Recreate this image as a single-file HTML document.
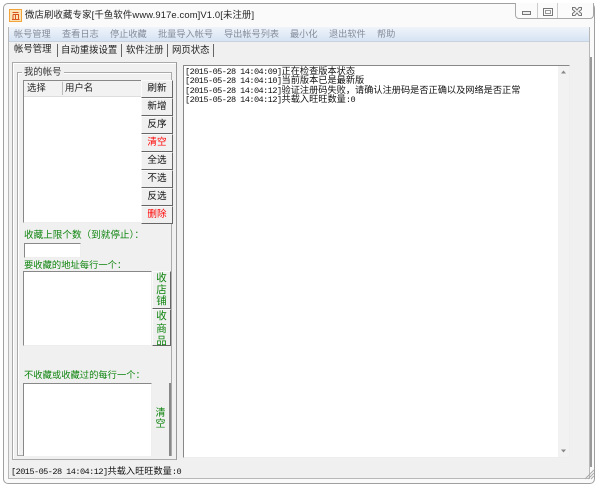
<!DOCTYPE html>
<html><head><meta charset="utf-8"><style>
html,body{margin:0;padding:0;background:#fff}
body{width:600px;height:487px;position:relative;overflow:hidden;font-family:"Liberation Sans","Noto Sans CJK SC",sans-serif;font-size:9.2px;color:#222;filter:blur(.25px)}
div{position:absolute;box-sizing:border-box}
.t{white-space:nowrap;line-height:12px}
.m{color:#858d9c}
.g{color:#0f850f}
.b{left:141px;width:32px;height:18px;background:#f0f0f0;border:1px solid;border-color:#fafafa #666 #666 #fafafa;text-align:center;line-height:16px;font-size:9.6px;color:#111}
.ta{background:#fff;border:1px solid;border-color:#888 #eee #eee #888}
.l{left:185px;white-space:nowrap;line-height:9px;font-size:9.2px;color:#111}
.n{font-family:"Liberation Mono",monospace;font-size:8.6px;letter-spacing:-.56px}
</style></head><body>
<div style="left:3px;top:3px;width:592px;height:481px;background:#fafafa;border:1px solid #a0a0a0;border-radius:5px"></div>
<div style="left:8px;top:27px;width:582px;height:452px;background:#f0f0f0;border:1px solid #b8b8b8;border-top:none"></div>
<!-- icon -->
<div style="left:9px;top:9px;width:13px;height:13px;background:#fde3b8;border:1px solid #f2a33a"></div>
<svg style="position:absolute;left:9px;top:9px" width="13" height="13"><path d="M3.5 3.5H9.5M4 5.5V10.5H9.5V5.5H4M6.5 5.5V10.5M3 10.5H10.5" stroke="#d9531e" fill="none"/></svg>
<div class="t" style="left:25px;top:9px;font-size:9.4px;color:#222;letter-spacing:.14px">微店刷收藏专家[千鱼软件www.917e.com]V1.0[未注册]</div>
<!-- window controls -->
<div style="left:515px;top:3px;width:79px;height:16px;background:#fbfbfb;border:1px solid #a8a8a8;border-top:none;border-radius:0 0 4px 4px"></div>
<div style="left:537px;top:3px;width:1px;height:15px;background:#ccc"></div>
<div style="left:557px;top:3px;width:1px;height:15px;background:#ccc"></div>
<div style="left:522px;top:11px;width:9px;height:4px;border:1px solid #777;background:#eee"></div>
<div style="left:543px;top:8px;width:10px;height:8px;border:1px solid #777"></div>
<div style="left:545px;top:10px;width:6px;height:4px;border:1px solid #999"></div>
<svg style="position:absolute;left:571px;top:6px" width="12" height="11"><path d="M1.5 1.5H4L6 4L8 1.5H10.5V3.5L8 5.5L10.5 7.5V9.5H8L6 7L4 9.5H1.5V7.5L4 5.5L1.5 3.5Z" fill="#f4f4f4" stroke="#777"/></svg>
<!-- menu -->
<div style="left:9px;top:27px;width:580px;height:15px;background:linear-gradient(#f0f4fa,#d6e3f3);border-bottom:1px solid #c9d3df"></div>
<div class="t m" style="left:14px;top:28px">帐号管理</div>
<div class="t m" style="left:62px;top:28px">查看日志</div>
<div class="t m" style="left:110px;top:28px">停止收藏</div>
<div class="t m" style="left:158px;top:28px">批量导入帐号</div>
<div class="t m" style="left:224px;top:28px">导出帐号列表</div>
<div class="t m" style="left:290px;top:28px">最小化</div>
<div class="t m" style="left:329px;top:28px">退出软件</div>
<div class="t m" style="left:377px;top:28px">帮助</div>
<!-- tabs -->
<div class="t" style="left:14px;top:43px;font-size:9.4px">帐号管理</div>
<div class="t" style="left:61px;top:44px;font-size:9.4px">自动重拨设置</div>
<div class="t" style="left:126px;top:44px;font-size:9.4px">软件注册</div>
<div class="t" style="left:172px;top:44px;font-size:9.4px">网页状态</div>
<div style="left:57px;top:44px;width:1px;height:13px;background:#666"></div>
<div style="left:121px;top:44px;width:1px;height:13px;background:#666"></div>
<div style="left:167px;top:44px;width:1px;height:13px;background:#666"></div>
<div style="left:213px;top:44px;width:1px;height:13px;background:#666"></div>
<!-- left outer -->
<div style="left:12px;top:62px;width:165px;height:398px;border:1px solid #aaa;border-right-color:#999;box-shadow:inset 1px 1px 0 #fff"></div>
<div style="left:17px;top:72px;width:155px;height:384px;border:1px solid #aaa;box-shadow:inset 1px 1px 0 #fff"></div>
<div class="t" style="left:22px;top:66px;background:#f0f0f0;padding:0 2px;font-size:9.4px;color:#333">我的帐号</div>
<!-- list -->
<div style="left:23px;top:80px;width:119px;height:143px;background:#fff;border:1px solid;border-color:#888 #eee #eee #888"></div>
<div style="left:24px;top:81px;width:117px;height:16px;background:#f2f2f2;border-bottom:1px solid #ddd"></div>
<div style="left:62px;top:82px;width:1px;height:13px;background:#bbb"></div>
<div class="t" style="left:27px;top:82px;font-size:9.4px">选择</div>
<div class="t" style="left:65px;top:82px;font-size:9.4px">用户名</div>
<div class="b" style="top:80px">刷新</div>
<div class="b" style="top:98px">新增</div>
<div class="b" style="top:116px">反序</div>
<div class="b" style="top:134px;color:#f00">清空</div>
<div class="b" style="top:152px">全选</div>
<div class="b" style="top:170px">不选</div>
<div class="b" style="top:188px">反选</div>
<div class="b" style="top:206px;color:#f00">删除</div>
<!-- limit -->
<div class="t g" style="left:24px;top:230px;font-size:9.6px">收藏上限个数（到就停止）：</div>
<div class="ta" style="left:24px;top:243px;width:57px;height:15px"></div>
<div class="t g" style="left:24px;top:259px;font-size:9.3px">要收藏的地址每行一个：</div>
<div class="ta" style="left:23px;top:271px;width:129px;height:75px"></div>
<div class="b" style="left:152px;top:271px;width:19px;height:38px;line-height:11.5px;padding-top:1px;font-size:10.5px;color:#0f850f">收<br>店<br>铺</div>
<div class="b" style="left:152px;top:309px;width:19px;height:37px;line-height:12.5px;padding-top:0;font-size:10.5px;color:#0f850f">收<br>商<br>品</div>
<div class="t g" style="left:24px;top:369px;font-size:9.3px">不收藏或收藏过的每行一个：</div>
<div class="ta" style="left:23px;top:383px;width:129px;height:73px;border-bottom:none"></div>
<div style="left:152px;top:383px;width:19px;height:73px;background:#f0f0f0;border-right:2px solid #888;text-align:center;line-height:11px;font-size:10px;padding-top:25px;color:#0f850f">清<br>空</div>
<!-- log -->
<div style="left:183px;top:65px;width:387px;height:393px;background:#fff;border:1px solid;border-color:#888 #eee #eee #888"></div>
<div style="left:558px;top:66px;width:11px;height:391px;background:#f2f2f2"></div>
<svg style="position:absolute;left:558px;top:66px" width="11" height="391"><path d="M3 7.5L5.5 4.5L8 7.5Z M3 383.5L5.5 386.5L8 383.5Z" fill="#888"/></svg>
<div class="l" style="top:67px"><span class="n">[2015-05-28 14:04:09]</span>正在检查版本状态</div>
<div class="l" style="top:76px"><span class="n">[2015-05-28 14:04:10]</span>当前版本已是最新版</div>
<div class="l" style="top:86px"><span class="n">[2015-05-28 14:04:12]</span>验证注册码失败，请确认注册码是否正确以及网络是否正常</div>
<div class="l" style="top:95px"><span class="n">[2015-05-28 14:04:12]</span>共载入旺旺数量<span class="n">:0</span></div>
<div style="left:590px;top:57px;width:2px;height:410px;background:#999"></div>
<!-- status -->
<div class="l" style="left:11px;top:467px"><span class="n">[2015-05-28 14:04:12]</span>共载入旺旺数量<span class="n">:0</span></div>
<svg style="position:absolute;left:584px;top:469px" width="11" height="11"><path d="M1 10L10 1M4 10L10 4M7 10L10 7" stroke="#aaa"/></svg>
</body></html>
